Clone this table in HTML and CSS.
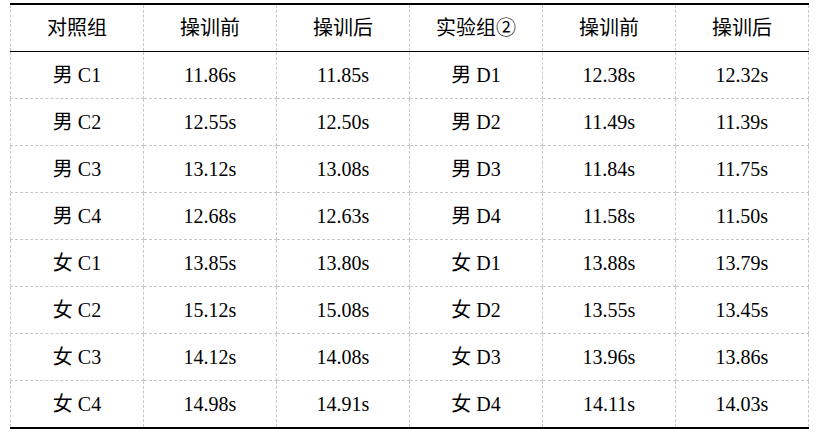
FILE: index.html
```html
<!DOCTYPE html>
<html lang="zh">
<head>
<meta charset="utf-8">
<title>操训成绩对照表</title>
<link rel="stylesheet" href="styles.css">
</head>
<body>
<table class="grid">
  <thead>
    <tr><th>对照组</th><th>操训前</th><th>操训后</th><th>实验组②</th><th>操训前</th><th>操训后</th></tr>
  </thead>
  <tbody>
    <tr><td>男 C1</td><td>11.86s</td><td>11.85s</td><td>男 D1</td><td>12.38s</td><td>12.32s</td></tr>
    <tr><td>男 C2</td><td>12.55s</td><td>12.50s</td><td>男 D2</td><td>11.49s</td><td>11.39s</td></tr>
    <tr><td>男 C3</td><td>13.12s</td><td>13.08s</td><td>男 D3</td><td>11.84s</td><td>11.75s</td></tr>
    <tr><td>男 C4</td><td>12.68s</td><td>12.63s</td><td>男 D4</td><td>11.58s</td><td>11.50s</td></tr>
    <tr><td>女 C1</td><td>13.85s</td><td>13.80s</td><td>女 D1</td><td>13.88s</td><td>13.79s</td></tr>
    <tr><td>女 C2</td><td>15.12s</td><td>15.08s</td><td>女 D2</td><td>13.55s</td><td>13.45s</td></tr>
    <tr><td>女 C3</td><td>14.12s</td><td>14.08s</td><td>女 D3</td><td>13.96s</td><td>13.86s</td></tr>
    <tr><td>女 C4</td><td>14.98s</td><td>14.91s</td><td>女 D4</td><td>14.11s</td><td>14.03s</td></tr>
  </tbody>
</table>
</body>
</html>
```
FILE: styles.css
```css
html, body {
  margin: 0;
  padding: 0;
  background: #ffffff;
}
body {
  padding: 3px 0 0 10px;
  font-family: "Liberation Serif", "Noto Sans CJK SC", serif;
  color: #000;
}
.grid {
  border-collapse: collapse;
  table-layout: fixed;
  width: 799px;
  font-size: 20px;
}
.grid th,
.grid td {
  border: 1px dashed #c8c8c8;
  padding: 0;
  height: 46px;
  line-height: 46px;
  text-align: center;
  font-weight: normal;
  white-space: nowrap;
}
.grid thead th {
  border-top: 2px solid #000;
  border-bottom: 1px solid #000;
}
.grid tbody tr:last-child td {
  border-bottom: 2px solid #000;
}
```
